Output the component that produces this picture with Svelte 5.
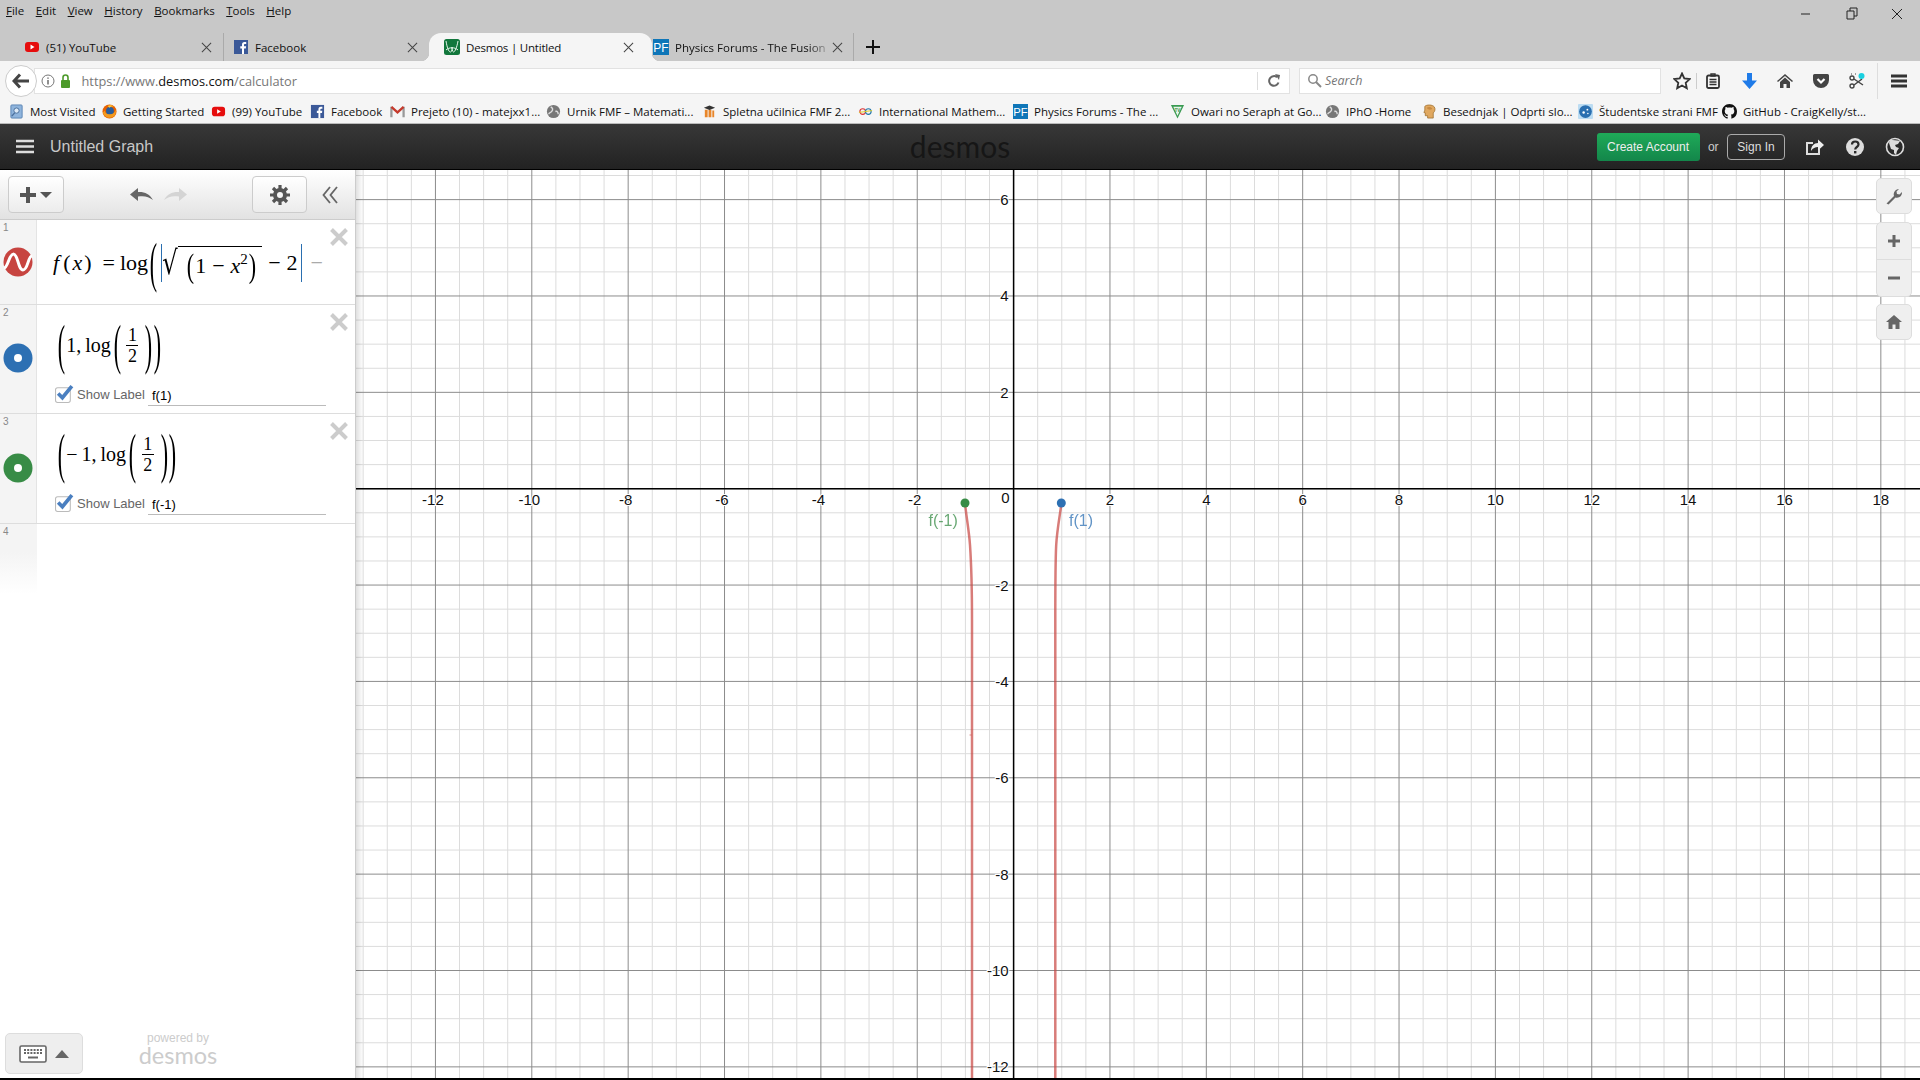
<script>
  const U = 48.18, OX = 1013.6, OY = 488.7;
  const minorX = [], majorX = [], minorY = [], majorY = [];
  for (let i = -28; i <= 40; i++) {
    const x = OX + i * U / 2;
    if (x < 356 || x > 1920) continue;
    (i % 4 === 0 ? majorX : minorX).push(x);
  }
  for (let i = -14; i <= 26; i++) {
    const y = OY + i * U / 2;
    if (y < 170 || y > 1078) continue;
    (i % 4 === 0 ? majorY : minorY).push(y);
  }
  const xLabels = [-12,-10,-8,-6,-4,-2,2,4,6,8,10,12,14,16,18];
  const yLabels = [6,4,2,-2,-4,-6,-8,-10,-12];
  const menus = [['F','ile'],['E','dit'],['V','iew'],['H','istory'],['B','ookmarks'],['T','ools'],['H','elp']];
  const bookmarks = [
    { t:'Most Visited', w:93, c:'#8fb4dc', k:'square' },
    { t:'Getting Started', w:109, c:'#e66000', k:'ff' },
    { t:'(99) YouTube', w:99, c:'#e60d0d', k:'yt' },
    { t:'Facebook', w:80, c:'#3b5998', k:'fb' },
    { t:'Prejeto (10) - matejxx1...', w:156, c:'#c5392b', k:'gm' },
    { t:'Urnik FMF – Matemati...', w:156, c:'#777', k:'globe' },
    { t:'Spletna učilnica FMF 2...', w:156, c:'#e8862a', k:'m' },
    { t:'International Mathem...', w:155, c:'#3a7', k:'imo' },
    { t:'Physics Forums - The ...', w:157, c:'#0f76b8', k:'pf' },
    { t:'Owari no Seraph at Go...', w:155, c:'#3a9a52', k:'tv' },
    { t:'IPhO -Home', w:97, c:'#777', k:'globe' },
    { t:'Besednjak | Odprti slo...', w:156, c:'#e0a860', k:'head' },
    { t:'Študentske strani FMF', w:144, c:'#2a6fb0', k:'stu' },
    { t:'GitHub - CraigKelly/st...', w:180, c:'#111', k:'gh' }
  ];
</script>

<div class="page">
  <div class="menubar">
    <div class="menus">
      {#each menus as m}<span class="menu"><u>{m[0]}</u>{m[1]}</span>{/each}
    </div>
    <div class="winctl">
      <svg width="140" height="20" viewBox="0 0 140 20">
        <path d="M21 11h9" stroke="#222" fill="none"/>
        <path d="M67 8h7v8h-7zM70 8V5h7v8h-3" stroke="#222" fill="none"/>
        <path d="M112 6l10 10M122 6l-10 10" stroke="#222" fill="none"/>
      </svg>
    </div>
  </div>

  <div class="tabs">
    <div class="tab t1">
      <svg class="fav" viewBox="0 0 16 16"><rect x="1" y="3" width="14" height="10" rx="3" fill="#e60d0d"/><path d="M6.500 5.500l4 2.500-4 2.500z" fill="#fff"/></svg>
      <span class="tabtext">(51) YouTube</span>
      <svg class="tabx" viewBox="0 0 12 12"><path d="M1 1l10 10M11 1L1 11"/></svg>
    </div>
    <div class="tab t2">
      <svg class="fav" viewBox="0 0 16 16"><rect x="1" y="1" width="14" height="14" fill="#3b5998"/><path d="M11 15V9.500h1.800l.3-2.200H11V6c0-.7.3-1 1-1h1.200V3h-1.800C9.800 3 9 4 9 5.600v1.700H7.300v2.200H9V15z" fill="#fff"/></svg>
      <span class="tabtext">Facebook</span>
      <svg class="tabx" viewBox="0 0 12 12"><path d="M1 1l10 10M11 1L1 11"/></svg>
    </div>
    <div class="tab active">
      <svg class="fav" viewBox="0 0 16 16"><rect width="16" height="16" rx="2.500" fill="#12773c"/><path d="M2 2c1 6 2.500 11 4.500 11S8 8 8 8s0 5 1.500 5S13 8 14 2M2 11c3-3 9-3 12 0" stroke="#e4f4e8" fill="none" stroke-width="1"/></svg>
      <span class="tabtext">Desmos | Untitled</span>
      <svg class="tabx" viewBox="0 0 12 12"><path d="M1 1l10 10M11 1L1 11"/></svg>
    </div>
    <div class="tab t4">
      <svg class="fav" viewBox="0 0 16 16"><rect width="16" height="16" fill="#0f76b8"/><text x="8" y="12.500" class="favtext">PF</text></svg>
      <span class="tabtext fade">Physics Forums - The Fusion</span>
      <svg class="tabx" viewBox="0 0 12 12"><path d="M1 1l10 10M11 1L1 11"/></svg>
    </div>
    <svg class="plus" viewBox="0 0 14 14"><path d="M7 0v14M0 7h14" stroke="#111" stroke-width="2" fill="none"/></svg>
  </div>

  <div class="nav">
    <div class="back">
      <svg width="18" height="16" viewBox="0 0 18 16"><path d="M8 1.500L2 8l6 6.500M3 8h14" stroke="#444" stroke-width="3" fill="none"/></svg>
    </div>
    <div class="url">
      <svg class="info" width="14" height="14" viewBox="0 0 14 14"><circle cx="7" cy="7" r="6" fill="none" stroke="#777"/><path d="M7 6v4.500M7 3.500v1.200" stroke="#555" stroke-width="1.300"/></svg>
      <svg class="lock" width="11" height="14" viewBox="0 0 11 14"><rect x="1" y="6" width="9" height="8" rx="1" fill="#4c9a2a"/><path d="M3 6V3.500a2.500 2.500 0 0 1 5 0V6" stroke="#4c9a2a" stroke-width="1.600" fill="none"/></svg>
      <span class="urltext">https://www.<b>desmos.com</b>/calculator</span>
      <span class="reload">
        <svg width="14" height="14" viewBox="0 0 14 14"><path d="M11.500 8.500A4.800 4.800 0 1 1 10 3.200" stroke="#666" stroke-width="2" fill="none"/><path d="M8 0l5 1-1 5z" fill="#666"/></svg>
      </span>
    </div>
    <div class="search">
      <svg width="15" height="15" viewBox="0 0 15 15"><circle cx="6" cy="6" r="4.200" fill="none" stroke="#888" stroke-width="1.500"/><path d="M9 9l5 5" stroke="#888" stroke-width="2"/></svg>
      <span>Search</span>
    </div>
    <div class="tools">
      <span class="slot star">
        <svg width="18" height="18" viewBox="0 0 18 18"><path d="M9 1.500l2.300 5 5.400.6-4 3.700 1.100 5.400L9 13.500 4.200 16.200l1.100-5.400-4-3.700 5.400-.6z" fill="none" stroke="#333" stroke-width="1.800"/></svg>
      </span>
      <span class="slot list">
        <svg width="14" height="16" viewBox="0 0 14 16"><rect x="1" y="2.500" width="12" height="12.500" rx="1.500" fill="none" stroke="#333" stroke-width="1.800"/><path d="M5 1h4v2H5zM3.500 6.500h7M3.500 9h7M3.500 11.500h7" stroke="#333" stroke-width="1.400" fill="none"/></svg>
      </span>
      <span class="slot dl">
        <svg width="15" height="16" viewBox="0 0 15 16"><path d="M5 0h5v7.500h5L7.500 16 0 7.500h5z" fill="#1f7be8"/></svg>
      </span>
      <span class="slot">
        <svg width="16" height="14" viewBox="0 0 16 14"><path d="M8 0l8 7-1 1-7-6-7 6-1-1z" fill="#444"/><path d="M8 3.500l5 4.500v6H9.500v-4h-3v4H3V8z" fill="#444"/></svg>
      </span>
      <span class="slot">
        <svg width="16" height="14" viewBox="0 0 16 14"><path d="M1.500 0h13A1.500 1.500 0 0 1 16 1.500V6A8 8 0 0 1 0 6V1.500A1.500 1.500 0 0 1 1.500 0z" fill="#444"/><path d="M4.500 5L8 8.500 11.500 5" stroke="#fff" stroke-width="2.200" fill="none"/></svg>
      </span>
      <span class="slot">
        <svg width="16" height="16" viewBox="0 0 16 16"><circle cx="3" cy="5" r="2" fill="none" stroke="#444" stroke-width="1.400"/><circle cx="3" cy="13" r="2" fill="none" stroke="#444" stroke-width="1.400"/><path d="M5 6l9 6M5 12l8-6" stroke="#444" stroke-width="1.500"/><path d="M2 1h1M6 1h1M10 2h1" stroke="#444"/><circle cx="12.500" cy="3" r="3" fill="#19d0e0"/></svg>
      </span>
      <span class="slot burger">
        <svg width="16" height="14" viewBox="0 0 16 14"><path d="M0 2h16M0 7h16M0 12h16" stroke="#333" stroke-width="2.800"/></svg>
      </span>
    </div>
  </div>

  <div class="bookmarks">
    {#each bookmarks as b}
      <div class="bm" style="width:{b.w}px">
        <svg class="fav" viewBox="0 0 16 16">
          {#if b.k === 'yt'}
            <rect x="1" y="3" width="14" height="10" rx="3" fill={b.c}/><path d="M6.500 5.500l4 2.500-4 2.500z" fill="#fff"/>
          {:else if b.k === 'fb'}
            <rect x="1" y="1" width="14" height="14" fill={b.c}/><path d="M11 15V9.500h1.800l.3-2.200H11V6c0-.7.3-1 1-1h1.200V3h-1.800C9.800 3 9 4 9 5.600v1.700H7.300v2.200H9V15z" fill="#fff"/>
          {:else if b.k === 'gm'}
            <path d="M1.500 3v11M14.500 3v11" stroke="#999" stroke-width="2.400" fill="none"/><path d="M1.500 3L8 9l6.500-6" stroke={b.c} stroke-width="2.400" fill="none"/>
          {:else if b.k === 'square'}
            <rect x="2" y="1" width="12" height="14" rx="1" fill={b.c} stroke="#5a84b4"/><circle cx="8" cy="7" r="2.800" fill="#dce9f6" stroke="#4a6f9c"/><path d="M6 9.500l-3 3.500" stroke="#4a6f9c" stroke-width="1.400"/>
          {:else if b.k === 'ff'}
            <circle cx="8" cy="8" r="7.500" fill="#e66000"/><circle cx="8.500" cy="7.500" r="4.200" fill="#2a5d9c"/><path d="M1 9c1 5 7 7 11 4.500 2.500-1.600 3.500-5 2.500-7.500-.8 3-3 5.500-7 5C5 10.800 3 9.500 3 7z" fill="#f39a1e"/><path d="M6 2c2-1.200 5-.8 7 1-2-.6-4 0-5 1z" fill="#ffcb37"/>
          {:else if b.k === 'globe'}
            <circle cx="8" cy="8" r="7" fill={b.c}/><path d="M5 3c2 1 3 3 1 5S3 9 3 11M10 8c2-1 3 1 3 3" stroke="#ddd" stroke-width="1.500" fill="none"/>
          {:else if b.k === 'm'}
            <path d="M3 14V6h3v8M7 14V6h3v8M11 14V7h2v7" fill={b.c}/><path d="M2 4l6-2.500L14 4 8 6.500z" fill="#333"/>
          {:else if b.k === 'imo'}
            <circle cx="5" cy="8" r="3" fill="none" stroke="#d33" stroke-width="1.200"/><circle cx="11" cy="8" r="3" fill="none" stroke="#27a" stroke-width="1.200"/><path d="M1 9l14-2" stroke="#dc2"/>
          {:else if b.k === 'pf'}
            <rect width="16" height="16" fill={b.c}/><text x="8" y="12.500" class="favtext">PF</text>
          {:else if b.k === 'tv'}
            <path d="M1 1h14L8 15.500z" fill={b.c}/><path d="M3.500 3h9L8 12.500z" fill="#e8f6ea"/><text x="8" y="8.500" class="favtv">TV</text>
          {:else if b.k === 'head'}
            <path d="M3 2.500C5 .5 11 .5 13 3c1.500 2 1 5-1 6.500V15H6v-2.500H3.500V9.500L2 9c.5-1 1-2 1-2.500z" fill={b.c} stroke="#9c6d2c" stroke-width=".8"/><path d="M5 4c2-1.500 5-1 6 1-1 1-4 2-6-1z" fill="#c78a42"/>
          {:else if b.k === 'stu'}
            <rect width="16" height="16" rx="1" fill="#bcdcf2"/><circle cx="8" cy="8" r="6.800" fill={b.c}/><circle cx="6" cy="9" r="1.300" fill="#fff"/><circle cx="10" cy="6" r="1" fill="#fff"/><circle cx="10.500" cy="10" r=".8" fill="#fff"/>
          {:else if b.k === 'gh'}
            <path fill={b.c} d="M8 0C3.580 0 0 3.580 0 8c0 3.540 2.290 6.530 5.470 7.590.4.070.55-.17.55-.38 0-.19-.01-.82-.01-1.490-2.010.37-2.530-.49-2.690-.94-.09-.23-.48-.94-.82-1.130-.28-.15-.68-.52-.01-.53.63-.01 1.080.58 1.230.82.720 1.210 1.870.87 2.330.66.070-.52.28-.87.51-1.070-1.780-.2-3.640-.89-3.640-3.950 0-.87.31-1.590.82-2.150-.08-.2-.36-1.020.08-2.120 0 0 .67-.21 2.200.82.64-.18 1.320-.27 2-.27.68 0 1.360.09 2 .27 1.530-1.040 2.200-.82 2.200-.82.44 1.100.16 1.920.08 2.120.51.56.82 1.270.82 2.150 0 3.070-1.870 3.750-3.650 3.950.29.25.54.73.54 1.480 0 1.070-.01 1.930-.01 2.200 0 .21.15.46.55.38A8.013 8.013 0 0 0 16 8c0-4.420-3.580-8-8-8z"/>
          {:else}
            <circle cx="8" cy="8" r="7" fill={b.c}/>
          {/if}
        </svg>
        <span>{b.t}</span>
      </div>
    {/each}
  </div>

  <div class="header">
    <div class="hleft">
      <svg width="18" height="15" viewBox="0 0 18 15"><path d="M0 2h18M0 7.500h18M0 13h18" stroke="#ddd" stroke-width="2.400"/></svg>
      <span class="title">Untitled Graph</span>
    </div>
    <div class="logo">desmos</div>
    <div class="hright">
      <button class="create">Create Account</button>
      <span class="or">or</span>
      <button class="signin">Sign In</button>
      <svg class="hicon share" width="20" height="20" viewBox="0 0 20 20"><path d="M14 12v5H2V6h6" stroke="#ddd" stroke-width="2" fill="none"/><path d="M6 14c0-5 3-8 7-8V2.500L19 8l-6 5.500V10c-3 0-5 1-7 4z" fill="#eee"/></svg>
      <svg class="hicon" width="20" height="20" viewBox="0 0 20 20"><circle cx="10" cy="10" r="9" fill="#ddd"/><path d="M7 7.500c0-4 6.500-4 6.500 0 0 2.500-3.300 2.500-3.300 5" stroke="#2a2a2a" stroke-width="2.200" fill="none"/><rect x="9" y="14" width="2.400" height="2.400" fill="#2a2a2a"/></svg>
      <svg class="hicon" width="20" height="20" viewBox="0 0 20 20"><circle cx="10" cy="10" r="8.500" fill="#2a2a2a" stroke="#ddd" stroke-width="1.600"/><path d="M5 3c3 0 7 0 10 1l-2 3-3 1 1 2 3 1-2 3-1 4-2-2 0-3-3-1-1-3-1-3z" fill="#ddd"/></svg>
    </div>
  </div>

  <div class="main">
    <aside class="panel">
      <div class="ptop">
        <button class="pbtn add">
          <svg width="34" height="18" viewBox="0 0 34 18"><path d="M9 1v16M1 9h16" stroke="#555" stroke-width="4"/><path d="M21 6h12l-6 6z" fill="#555"/></svg>
        </button>
        <div class="undo">
          <svg width="23" height="15" viewBox="0 0 23 15"><path d="M0 7.500L8 1v4c6-.5 12 2 15 8-4-3.500-9-4.500-15-3.500V14z" fill="#666"/></svg>
          <svg width="23" height="15" viewBox="0 0 23 15"><path d="M23 7.500L15 1v4C9 4.500 3 7 0 13c4-3.500 9-4.500 15-3.500V14z" fill="#d4d4d4"/></svg>
        </div>
        <button class="pbtn gear">
          <svg width="20" height="20" viewBox="0 0 20 20"><circle cx="10" cy="10" r="5" fill="none" stroke="#555" stroke-width="4"/><path d="M10 0v4M10 16v4M0 10h4M16 10h4M3 3l3 3M14 14l3 3M17 3l-3 3M3 17l3-3" stroke="#555" stroke-width="3.200"/></svg>
        </button>
        <svg class="chev" width="16" height="18" viewBox="0 0 16 18"><path d="M8 1L1.500 9 8 17M15 1L8.500 9 15 17" stroke="#666" stroke-width="1.800" fill="none"/></svg>
      </div>

      <div class="row r1">
        <div class="gutter"><span class="num">1</span>
          <svg class="swatch" viewBox="0 0 30 30"><circle cx="15" cy="15" r="14.500" fill="#c74440"/><path d="M1 21C5 21 6 7 10.500 7S15 23 20 23s5-14 9-14" stroke="#fff" stroke-width="3" fill="none"/></svg>
        </div>
        <div class="expr math e1">
          <i class="f">f</i><span class="pn">(</span><i>x</i><span class="pn">)</span>
          <span class="eq">=</span><span class="log">log</span><span class="big bp1">(</span>
          <span class="bar b1"></span>
          <span class="rad">√</span>
          <span class="vin"><span class="md">(</span><span>1</span><span class="op">−</span><i>x</i><sup>2</sup><span class="md">)</span></span>
          <span class="op o2">−</span><span>2</span>
          <span class="bar b2"></span>
          <span class="op fadeop">−</span>
        </div>
        <svg class="close" viewBox="0 0 18 18"><path d="M1.500 1.500l15 15M16.500 1.500l-15 15"/></svg>
      </div>

      <div class="row r2">
        <div class="gutter"><span class="num">2</span>
          <svg class="swatch sw2" viewBox="0 0 30 30"><circle cx="15" cy="15" r="14.500" fill="#2d70b3"/><circle cx="15" cy="15" r="4" fill="#fff"/></svg>
        </div>
        <div class="expr">
          <div class="math e2">
            <span class="big o">(</span><span>1,</span><span class="log l2">log</span><span class="big i">(</span>
            <span class="frac"><span>1</span><span class="den">2</span></span>
            <span class="big i">)</span><span class="big c">)</span>
          </div>
          <div class="lab">
            <svg class="check" viewBox="0 0 18 18"><rect x=".5" y="3.500" width="14" height="14" rx="2" fill="#fff" stroke="#bbb"/><path d="M3 9l4 4 9-11" stroke="#4a7fc0" stroke-width="3.500" fill="none"/></svg>
            <span class="ltxt">Show Label</span>
            <span class="linp">f(1)</span>
          </div>
        </div>
        <svg class="close" viewBox="0 0 18 18"><path d="M1.500 1.500l15 15M16.500 1.500l-15 15"/></svg>
      </div>

      <div class="row r3">
        <div class="gutter"><span class="num">3</span>
          <svg class="swatch sw2" viewBox="0 0 30 30"><circle cx="15" cy="15" r="14.500" fill="#388c46"/><circle cx="15" cy="15" r="4" fill="#fff"/></svg>
        </div>
        <div class="expr">
          <div class="math e2">
            <span class="big o">(</span><span class="neg">−</span><span>1,</span><span class="log l2">log</span><span class="big i">(</span>
            <span class="frac"><span>1</span><span class="den">2</span></span>
            <span class="big i">)</span><span class="big c">)</span>
          </div>
          <div class="lab">
            <svg class="check" viewBox="0 0 18 18"><rect x=".5" y="3.500" width="14" height="14" rx="2" fill="#fff" stroke="#bbb"/><path d="M3 9l4 4 9-11" stroke="#4a7fc0" stroke-width="3.500" fill="none"/></svg>
            <span class="ltxt">Show Label</span>
            <span class="linp">f(-1)</span>
          </div>
        </div>
        <svg class="close" viewBox="0 0 18 18"><path d="M1.500 1.500l15 15M16.500 1.500l-15 15"/></svg>
      </div>

      <div class="row r4">
        <div class="gutter g4"><span class="num">4</span></div>
      </div>

      <div class="pfoot">
        <button class="kbd">
          <svg width="28" height="18" viewBox="0 0 28 18"><rect x="1" y="1" width="26" height="16" rx="1.500" fill="#fff" stroke="#666" stroke-width="1.600"/><path d="M5 5h18M5 8h18" stroke="#666" stroke-width="1.800" stroke-dasharray="2 1.200"/><path d="M9 12.500h10" stroke="#666" stroke-width="2"/></svg>
          <svg width="14" height="8" viewBox="0 0 14 8"><path d="M7 0l7 8H0z" fill="#666"/></svg>
        </button>
        <div class="powered"><span class="pby">powered by</span><span class="plogo">desmos</span></div>
      </div>
    </aside>

    <div class="graph">
      <svg class="plot" viewBox="356 170 1564 908" width="1564" height="908">
        <rect x="356" y="170" width="1564" height="908" fill="#fff"/>
        {#each minorX as x}<line x1={x} x2={x} y1="170" y2="1078" class="minor"/>{/each}
        {#each minorY as y}<line y1={y} y2={y} x1="356" x2="1920" class="minor"/>{/each}
        {#each majorX as x}<line x1={x} x2={x} y1="170" y2="1078" class="major"/>{/each}
        {#each majorY as y}<line y1={y} y2={y} x1="356" x2="1920" class="major"/>{/each}
        <line x1={OX} x2={OX} y1="170" y2="1078" class="axis"/>
        <line y1={OY} y2={OY} x1="356" x2="1920" class="axis"/>
        {#each xLabels as v}
          <text x={OX + v * U - (v < 0 ? 2.500 : 0)} y="505" class="tick" text-anchor="middle">{v}</text>
        {/each}
        {#each yLabels as v}
          <text x={OX - 5} y={OY - v * U + 5.500} class="tick" text-anchor="end">{v}</text>
        {/each}
        <text x={OX - 4} y="503" class="tick" text-anchor="end">0</text>
        <path d="M965 503C966 515 969 530 970 545S972 590 972 620V1078" class="curve"/>
        <path d="M1061.500 503C1060 515 1057 530 1056.200 545S1055.300 590 1055.300 620V1078" class="curve"/>
        <path d="M969.500 735h2" stroke="#c74440" fill="none" opacity=".6"/>
        <circle cx="965" cy="503" r="4.500" fill="#388c46"/>
        <circle cx="1061.300" cy="503" r="4.500" fill="#2d70b3"/>
        <text x="928.500" y="526" class="plabel g">f(-1)</text>
        <text x="1069" y="526" class="plabel b">f(1)</text>
      </svg>
      <div class="shadow"></div>
      <div class="gtools">
        <button class="gbtn single">
          <svg width="18" height="18" viewBox="0 0 18 18"><path d="M1.500 16.500L9 9c-1-3 1-7 5-7l-2.500 2.500.5 2.500 2.500.5L17 5c.3 4-3 6.500-6.500 5.500L3.500 17.500z" fill="#666"/></svg>
        </button>
        <div class="gbtn double">
          <div class="half">
            <svg width="14" height="14" viewBox="0 0 14 14"><path d="M7 1v12M1 7h12" stroke="#666" stroke-width="3"/></svg>
          </div>
          <div class="half minus">
            <svg width="14" height="14" viewBox="0 0 14 14"><path d="M1 7h12" stroke="#666" stroke-width="3"/></svg>
          </div>
        </div>
        <button class="gbtn single">
          <svg width="16" height="14" viewBox="0 0 16 14"><path d="M8 0L0 7h2.500v7h4V9.500h3V14h4V7H16z" fill="#666"/></svg>
        </button>
      </div>
    </div>
  </div>
  <div class="bottom"></div>
</div>

<style>
  :global(body) { margin: 0; overflow: hidden; background: #fff; }
  .page { width: 1920px; height: 1080px; display: flex; flex-direction: column; overflow: hidden; font-family: "Open Sans", "Liberation Sans", sans-serif; font-size: 11.5px; color: #111; }
  button { font: inherit; padding: 0; margin: 0; }

  .menubar { height: 33px; background: #c8c8c8; display: flex; justify-content: space-between; flex: none; }
  .menus { display: flex; gap: 11.500px; padding: 2px 0 0 6px; height: 17px; line-height: 17px; }
  .menu { color: #111; }
  .menu u { text-decoration: underline; }
  .winctl { padding-top: 3px; }
  .winctl svg { display: block; }

  .tabs { height: 28px; background: #c8c8c8; display: flex; padding-left: 24px; align-items: stretch; flex: none; }
  .tab { display: flex; align-items: center; position: relative; padding-right: 11px; flex: none; box-sizing: border-box; }
  .tab .fav { margin-right: 6px; }
  .t1 { width: 200px; border-right: 1px solid #aaa; }
  .t2 { width: 205px; padding-left: 9px; }
  .active { width: 223px; background: #f5f5f5; border-radius: 12px 12px 0 0; padding-left: 15px; padding-right: 18px; }
  .active .tabtext { letter-spacing: -.2px; }
  .active::before, .active::after { content: ""; position: absolute; bottom: 0; width: 8px; height: 8px; }
  .active::before { left: -8px; background: radial-gradient(circle at 0 0, transparent 8px, #f5f5f5 8.500px); }
  .active::after { right: -8px; background: radial-gradient(circle at 100% 0, transparent 8px, #f5f5f5 8.500px); }
  .t4 { width: 202px; border-right: 1px solid #aaa; padding-left: 1px; padding-right: 10px; }
  .fav { width: 16px; height: 16px; flex: none; }
  .favtext { font-family: "Liberation Sans", sans-serif; font-size: 12px; fill: #fff; text-anchor: middle; }
  .favtv { font-family: "Liberation Sans", sans-serif; font-size: 5px; fill: #388c46; text-anchor: middle; font-weight: 700; }
  .tabtext { flex: 1; white-space: nowrap; overflow: hidden; }
  .fade { -webkit-mask-image: linear-gradient(90deg, #000 85%, transparent); mask-image: linear-gradient(90deg, #000 85%, transparent); }
  .tabx { width: 11px; height: 11px; flex: none; stroke: #444; stroke-width: 1.100; fill: none; }
  .plus { width: 14px; height: 14px; align-self: center; margin-left: 12px; }

  .nav { height: 39px; background: #f5f5f5; display: flex; align-items: center; position: relative; flex: none; box-sizing: border-box; padding-left: 5px; }
  .back { width: 30px; height: 30px; border-radius: 50%; border: 1px solid #ccc; background: #fff; display: flex; align-items: center; justify-content: center; z-index: 1; margin-right: -3px; flex: none; }
  .url { width: 1256px; height: 26px; background: #fff; border: 1px solid #e2e2e2; box-sizing: border-box; display: flex; align-items: center; padding-left: 6px; flex: none; }
  .info { margin-right: 5px; }
  .lock { margin-right: 10.500px; }
  .urltext { font-size: 12.800px; color: #777; flex: 1; }
  .urltext b { font-weight: 400; color: #111; }
  .reload { width: 31px; height: 18px; border-left: 1px solid #ddd; display: flex; align-items: center; justify-content: center; }
  .search { width: 362px; height: 26px; margin-left: 9px; background: #fff; border: 1px solid #e2e2e2; box-sizing: border-box; display: flex; align-items: center; padding-left: 7px; gap: 3px; color: #777; font-style: italic; font-size: 12.500px; flex: none; }
  .tools { display: flex; align-items: center; margin-left: 3px; height: 36px; }
  .slot { width: 36px; height: 36px; display: flex; align-items: center; justify-content: center; flex: none; }
  .star { position: relative; }
  .star::after { content: ""; position: absolute; right: 3px; top: 10px; height: 16px; width: 1px; background: #ccc; }
  .list { width: 26px; }
  .dl { margin-left: 5px; }
  .burger { width: 42px; border-left: 1px solid #ddd; margin-left: 2px; box-sizing: border-box; }

  .bookmarks { height: 24px; background: #f5f5f5; border-bottom: 1px solid #bbb; display: flex; align-items: center; padding-left: 9px; flex: none; box-sizing: border-box; }
  .bm { display: flex; align-items: center; gap: 6px; white-space: nowrap; flex: none; box-sizing: border-box; }
  .bm .fav { width: 15px; height: 15px; }

  .header { height: 46px; background: linear-gradient(#383838, #222); border-bottom: 1px solid #000; box-sizing: border-box; display: flex; align-items: center; position: relative; padding: 0 15px 0 16px; flex: none; }
  .hleft { display: flex; align-items: center; gap: 16px; }
  .title { font-family: "Liberation Sans", sans-serif; font-size: 16px; color: #c8c8c8; margin-top: 1px; }
  .logo { position: absolute; left: 0; right: 0; top: 4px; text-align: center; font-family: "Lato", sans-serif; font-size: 30px; color: #161616; pointer-events: none; }
  .hright { margin-left: auto; display: flex; align-items: center; position: relative; }
  .create { width: 103px; height: 28px; background: linear-gradient(#1faa58, #13864a); border: none; border-radius: 3px; color: #eee; font-family: "Liberation Sans", sans-serif; font-size: 12px; }
  .or { width: 27.500px; text-align: center; color: #ccc; font-family: "Liberation Sans", sans-serif; font-size: 12px; }
  .signin { width: 58px; height: 26px; background: transparent; border: 1px solid #aaa; border-radius: 4px; color: #ddd; font-family: "Liberation Sans", sans-serif; font-size: 12px; }
  .hicon { margin-left: 20px; flex: none; }

  .main { flex: 1; min-height: 0; display: flex; }
  .bottom { height: 2px; background: #000; flex: none; }

  .panel { width: 356px; flex: none; position: relative; display: flex; flex-direction: column; background: #fff; border-right: 1px solid #ccc; box-sizing: border-box; }
  .ptop { height: 50px; background: linear-gradient(#fff, #e2e2e2); border-bottom: 1px solid #ccc; box-sizing: border-box; display: flex; align-items: center; padding-left: 8px; flex: none; }
  .pbtn { height: 37px; background: linear-gradient(#fff, #ececec); border: 1px solid #ccc; border-radius: 4px; display: flex; align-items: center; justify-content: center; }
  .add { width: 56px; }
  .gear { width: 55px; }
  .undo { width: 188px; display: flex; justify-content: center; gap: 11px; }
  .chev { margin-left: 15px; }

  .row { display: flex; border-bottom: 1px solid #ddd; position: relative; flex: none; box-sizing: border-box; }
  .r1 { height: 85px; }
  .r2 { height: 109px; }
  .r3 { height: 110px; }
  .r4 { height: 70px; border-bottom: none; }
  .gutter { width: 37px; flex: none; background: #f4f4f4; border-right: 1px solid #e4e4e4; box-sizing: border-box; position: relative; display: flex; align-items: center; }
  .g4 { background: linear-gradient(#f4f4f4 40%, #fff); border-right: none; }
  .num { position: absolute; left: 3px; top: 2px; font-family: "Liberation Sans", sans-serif; font-size: 10px; color: #888; }
  .swatch { width: 30px; height: 30px; margin-left: 3px; }
  .sw2 { margin-top: -2px; }
  .close { position: absolute; right: 7px; top: 8px; width: 18px; height: 18px; stroke: #ccc; stroke-width: 4; fill: none; }

  .expr { flex: 1; min-width: 0; }
  .math { font-family: "Liberation Serif", serif; font-size: 20px; color: #000; display: flex; align-items: center; white-space: nowrap; }
  .e1 { height: 84px; padding: 2px 0 0 16px; box-sizing: border-box; font-size: 22px; }
  .e2 { height: 69px; padding: 12px 0 0 19.500px; box-sizing: border-box; }
  .pn { margin: 0 2px; }
  .f { margin-right: 2px; }
  .eq { margin: 0 5px 0 9px; }
  .log { margin-right: 1px; }
  .big { display: inline-block; font-size: 20px; transform: scale(1.100, 2.700); transform-origin: center; margin: 0 1px; font-weight: 400; color: #000; }
  .big.o { margin-right: 2px; }
  .bp1 { transform: scale(1.100, 2.700); }
  .bar { width: 1px; height: 38px; background: #2a6fb0; flex: none; }
  .b1 { margin-left: 3px; }
  .b2 { margin-left: 3px; }
  .rad { display: inline-block; font-size: 22px; margin-left: 1px; font-family: "DejaVu Serif", serif; line-height: 1; transform: scale(1.100, 1.500); }
  .vin { display: flex; align-items: center; border-top: 1px solid #000; margin-left: 1px; padding: 4px 5px 0 8px; height: 34px; box-sizing: border-box; }
  .vin sup { font-size: 15px; line-height: 1; align-self: flex-start; margin-top: 1px; }
  .md { display: inline-block; transform: scale(1, 1.500); margin: 0 1px; }
  .op { margin: 0 6px; }
  .o2 { margin: 0 6px; }
  .fadeop { color: #aaa; margin: 0 0 0 9px; }
  .neg { margin-right: 4px; }
  .i { margin-left: 2px; }
  .l2 { margin-left: 4px; }
  .frac { display: flex; flex-direction: column; align-items: center; font-size: 18px; line-height: 20px; margin: 0 5px; width: 12px; }
  .den { border-top: 1px solid #000; width: 100%; text-align: center; }

  .lab { display: flex; align-items: center; font-family: "Liberation Sans", sans-serif; font-size: 13px; padding-left: 18px; height: 24px; margin-top: 8px; }
  .check { width: 19px; height: 19px; flex: none; margin-top: -2px; }
  .ltxt { color: #666; margin-left: 3px; width: 71px; flex: none; }
  .linp { width: 178px; flex: none; color: #000; padding-left: 4px; border-bottom: 1px solid #bbb; line-height: 19px; margin-top: 3px; box-sizing: border-box; }

  .pfoot { position: absolute; left: 5px; right: 0; bottom: 3px; height: 42px; display: flex; }
  .kbd { width: 78px; height: 41px; background: #eee; border: 1px solid #ddd; border-radius: 5px; display: flex; align-items: center; justify-content: center; gap: 8px; flex: none; }
  .powered { width: 190px; display: flex; flex-direction: column; align-items: center; color: #ccc; margin-top: -2px; }
  .pby { font-family: "Liberation Sans", sans-serif; font-size: 12px; line-height: 14px; }
  .plogo { font-family: "Lato", sans-serif; font-size: 23.500px; line-height: 20px; }

  .graph { flex: 1; position: relative; overflow: hidden; }
  .plot { display: block; }
  .minor { stroke: #dcdcdc; stroke-width: 1; }
  .major { stroke: #8c8c8c; stroke-width: 1; }
  .axis { stroke: #000; stroke-width: 1.500; }
  .tick { font-family: "Liberation Sans", sans-serif; font-size: 15px; fill: #111; paint-order: stroke; stroke: #fff; stroke-width: 2px; }
  .curve { fill: none; stroke: #c74440; stroke-width: 2.500; opacity: .7; }
  .plabel { font-family: "Liberation Sans", sans-serif; font-size: 16px; opacity: .75; }
  .plabel.g { fill: #388c46; }
  .plabel.b { fill: #2d70b3; }
  .shadow { position: absolute; left: 0; top: 0; bottom: 0; width: 7px; background: linear-gradient(90deg, rgba(0,0,0,.12), transparent); pointer-events: none; }
  .gtools { position: absolute; top: 8px; right: 8px; width: 36px; display: flex; flex-direction: column; gap: 8px; }
  .gbtn { width: 36px; background: #efefef; border: 1px solid #ddd; border-radius: 5px; box-sizing: border-box; display: flex; flex-direction: column; align-items: center; justify-content: center; }
  .single { height: 36px; }
  .double { height: 75px; margin-bottom: -1px; }
  .half { height: 37px; width: 100%; display: flex; align-items: center; justify-content: center; }
  .minus { border-top: 1px solid #ddd; }
</style>
